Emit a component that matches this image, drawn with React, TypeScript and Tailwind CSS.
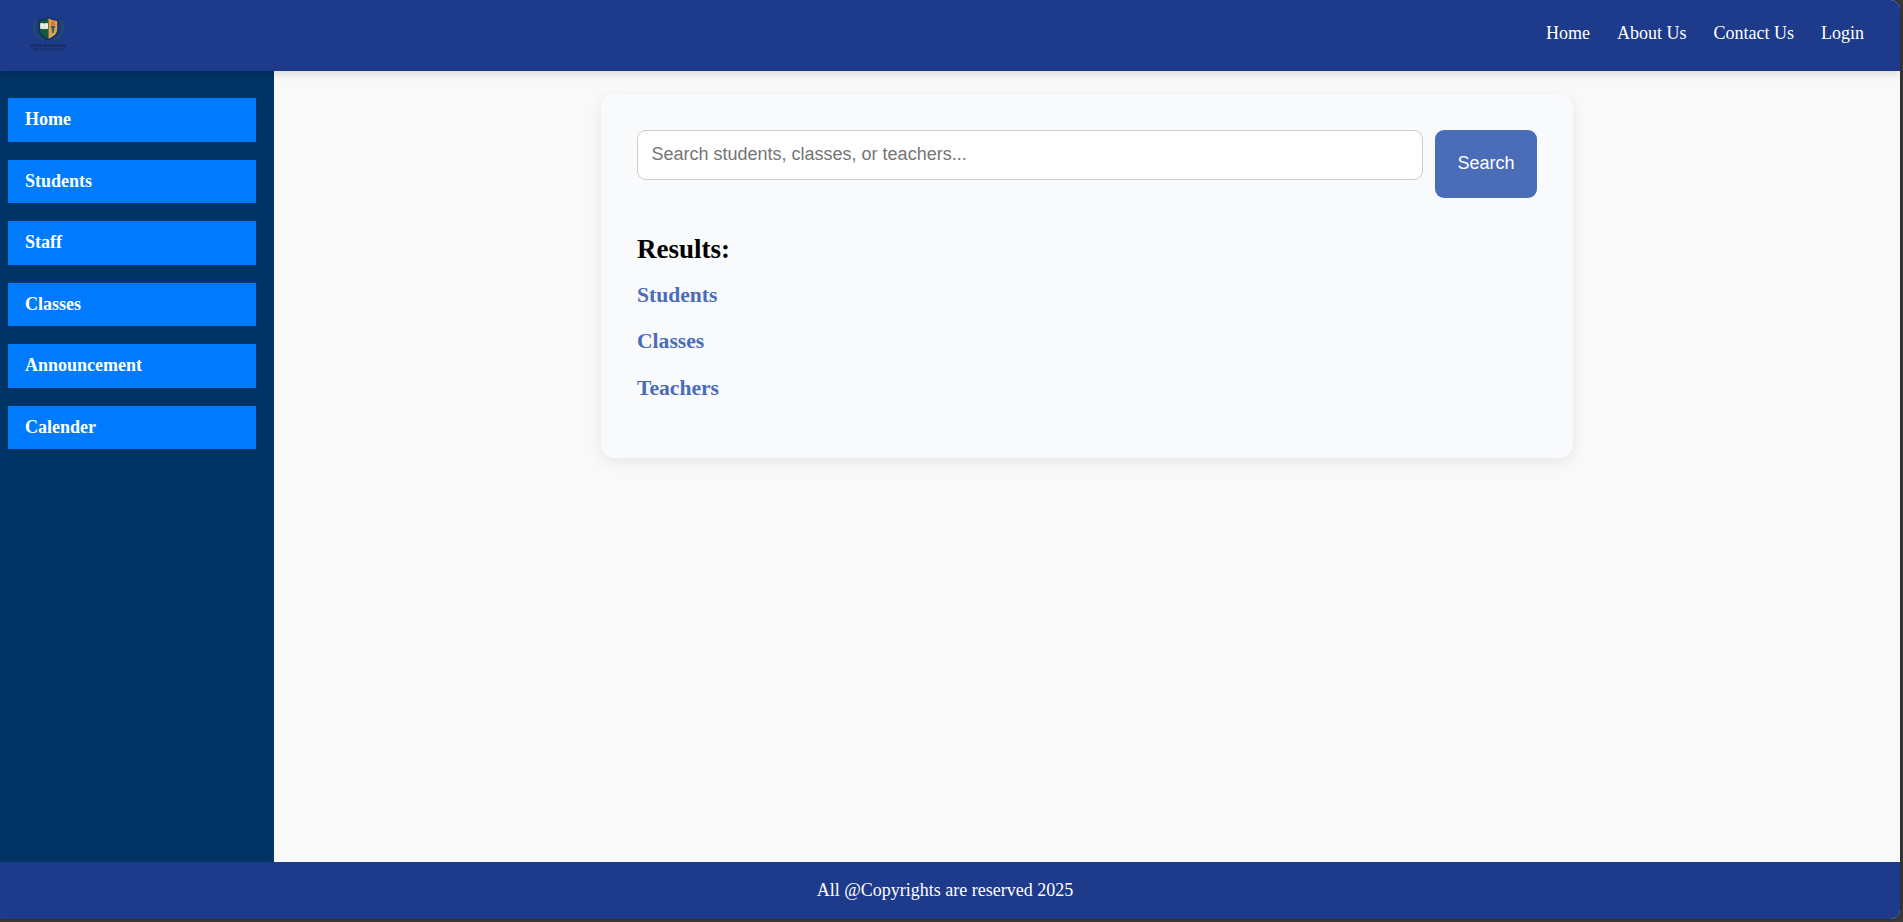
const navLinks = ["Home", "About Us", "Contact Us", "Login"];
const menu = [
  { label: "Home", size: "h-[44px] mb-[18px]" },
  { label: "Students", size: "h-[43px] mb-[18px]" },
  { label: "Staff", size: "h-[44px] mb-[18px]" },
  { label: "Classes", size: "h-[43px] mb-[18px]" },
  { label: "Announcement", size: "h-[44px] mb-[18px]" },
  { label: "Calender", size: "h-[43px]" },
];

function Logo() {
  return (
    <svg width="50" height="44" viewBox="-6 0 50 44" className="overflow-visible" role="img" aria-label="School crest">
      <g fill="none" stroke="#1d5560" strokeWidth="2.6" strokeDasharray="1.7 0.6">
        <path d="M6 5.500C2 13 5 20 13 24.500" />
        <path d="M31 5.500C35 13 32 20 24 24.500" />
      </g>
      <path d="M18.500 1Q13.500 4 8.500 4V13C8.500 18.500 13 22 18.500 24C24 22 28.500 18.500 28.500 13V4Q23.500 4 18.500 1Z" fill="#142b4e" />
      <path d="M18.500 2.200Q14 5 9.700 5V13C9.700 17.700 13.500 20.800 18.500 22.700Z" fill="#17593f" />
      <path d="M18.500 2.200Q23 5 27.300 5V13C27.300 17.700 23.500 20.800 18.500 22.700Z" fill="#d3a354" />
      <path d="M10.200 7.300Q12.300 6.600 14.200 7.600Q16 6.600 18 7.300V13Q16 12.300 14.200 13.200Q12.300 12.300 10.200 13Z" fill="#eef0e6" />
      <path d="M14.200 8V13" stroke="#a9bdb0" strokeWidth="0.500" />
      <path d="M20.800 8.500Q20.500 6.500 22.800 4.800Q25.700 7 24.800 9.500H21.500Z" fill="#e46d3c" />
      <path d="M21 10H25V12H24.200L23.700 17H22.300L21.700 12H21Z" fill="#356052" />
      <text x="18.700" y="31" textAnchor="middle" fontFamily="Liberation Serif, serif" fontWeight="700" fontSize="4.700" textLength="36" lengthAdjust="spacingAndGlyphs" fill="#0e2148">PUNJAB SCHOOL</text>
      <text x="18.500" y="35" textAnchor="middle" fontFamily="Liberation Serif, serif" fontWeight="700" fontSize="3.300" textLength="29" lengthAdjust="spacingAndGlyphs" fill="#13295a">OF EXCELLENCE</text>
    </svg>
  );
}

export default function App() {
  return (
    <div className="h-[922px] w-full overflow-hidden bg-[#3b3b3b] pr-[3px] pb-[3px] font-['Liberation_Serif',serif] text-[18px] leading-[20px]">
      <div className="flex h-[919px] flex-col overflow-hidden rounded-r-[9px] bg-[#f9f9f9] shadow-[0_0_4px_#222]">
        <header className="z-10 flex h-[71px] shrink-0 items-start justify-between bg-[#1e3a8a] pl-6 pr-9 text-white shadow-[0_2px_9px_rgba(0,0,0,0.15)]">
          <div className="pt-4">
            <Logo />
          </div>
          <nav className="flex gap-[27px] pt-[23px]">
            {navLinks.map((link) => (
              <a key={link} href="#">{link}</a>
            ))}
          </nav>
        </header>
        <div className="flex min-h-0 flex-1">
          <aside className="w-[274px] shrink-0 bg-[#003366] pl-2 pr-[18px] pt-[27px] font-bold text-white">
            {menu.map((item) => (
              <a key={item.label} href="#" className={`flex items-center bg-[#007bff] pb-[2px] pl-[17px] ${item.size}`}>
                {item.label}
              </a>
            ))}
          </aside>
          <main className="flex flex-1 items-start justify-center pt-[23px]">
            <section className="h-[364px] w-[972px] rounded-[14px] bg-[#f9fafc] p-9 shadow-[0_4px_14px_rgba(0,0,0,0.08)]">
              <form className="flex items-start gap-3 font-['Liberation_Sans',sans-serif]">
                <input
                  type="text"
                  placeholder="Search students, classes, or teachers..."
                  className="h-[50px] w-[786px] rounded-[9px] border border-[#ccc] bg-white px-[13.500px] pb-[2px] outline-none placeholder:text-[#757575] placeholder:opacity-100"
                />
                <button type="button" className="h-[68px] w-[102px] rounded-[9px] bg-[#4b6cb7] pb-[2px] text-white">
                  Search
                </button>
              </form>
              <h2 className="mt-9 text-[27px] leading-[31px] font-bold text-black">Results:</h2>
              <div className="mt-[17.500px] flex flex-col gap-[22px] text-[21.600px] leading-[24.500px] font-bold text-[#4b6cb7]">
                <h3>Students</h3>
                <h3>Classes</h3>
                <h3>Teachers</h3>
              </div>
            </section>
          </main>
        </div>
        <footer className="flex h-[57px] shrink-0 items-center justify-center bg-[#1e3a8a] pr-[10px] pb-[1px] text-white">
          All @Copyrights are reserved 2025
        </footer>
      </div>
    </div>
  );
}
